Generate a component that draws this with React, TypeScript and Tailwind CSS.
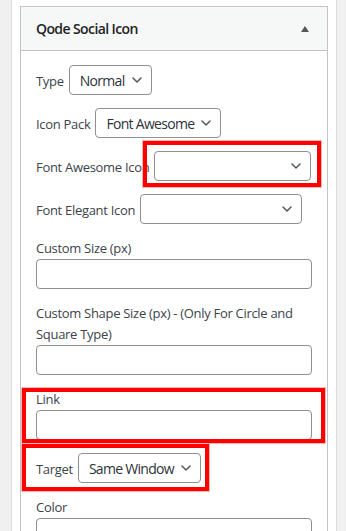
import React from 'react'

function Chevron() {
  return (
    <svg viewBox="0 0 10 6" className="w-[10px] h-[6px] shrink-0" fill="none">
      <path d="M1 1l4 4 4-4" stroke="#50575e" strokeWidth="1.5" strokeLinecap="round" strokeLinejoin="round" />
    </svg>
  )
}

function Select({ value, width }: { value?: string; width?: string }) {
  return (
    <div
      className={`h-[30px] flex items-center justify-between gap-[7px] pl-[10px] pr-[9px] border border-[#8c8f94] rounded-[4px] bg-white text-[14px] tracking-[-0.7px] text-[#2c3338] ${width ?? ''}`}
    >
      <span className="whitespace-nowrap">{value}</span>
      <Chevron />
    </div>
  )
}

function InlineSelect({ label, value, width }: { label: string; value?: string; width?: string }) {
  return (
    <div className="flex items-center gap-[5px] mb-[13px]">
      <span className="whitespace-nowrap pt-[3px]">{label}</span>
      <Select value={value} width={width} />
    </div>
  )
}

function TextField({ label }: { label: React.ReactNode }) {
  return (
    <div className="mb-[13px]">
      <div className="leading-[21px] pt-[1px]">{label}</div>
      <div className="h-[30px] w-[276px] border border-[#8c8f94] rounded-[4px] bg-white" />
    </div>
  )
}

export default function App() {
  return (
    <div className="relative h-[531px] overflow-hidden bg-[#f0f0f1] font-['Open_Sans',sans-serif] text-[13px] tracking-[-0.3px] text-[#3c434a]">
      <div className="ml-[11px] w-[326px] h-full border-x border-[#dcdcde] bg-white pt-[6px] px-[8px]">
        <div className="border border-[#c3c4c7] bg-white h-[600px]">
          <div className="h-[44px] bg-[#f6f7f7] border-b border-[#c3c4c7] flex items-center justify-between pl-[15px] pr-[18px]">
            <h2 className="text-[14px] font-semibold tracking-[-0.6px] text-[#1d2327]">Qode Social Icon</h2>
            <svg viewBox="0 0 8 6" className="w-[8px] h-[6px]">
              <path d="M4 0L8 6H0z" fill="#50575e" />
            </svg>
          </div>
          <div className="pl-[15px] pr-[14px] pt-[14px]">
            <InlineSelect label="Type" value="Normal" />
            <InlineSelect label="Icon Pack" value="Font Awesome" />
            <InlineSelect label="Font Awesome Icon" width="w-[157px]" />
            <InlineSelect label="Font Elegant Icon" width="w-[162px]" />
            <TextField label="Custom Size (px)" />
            <TextField
              label={
                <>
                  Custom Shape Size (px) - (Only For Circle and
                  <br />
                  Square Type)
                </>
              }
            />
            <TextField label="Link" />
            <InlineSelect label="Target" value="Same Window" />
            <TextField label="Color" />
          </div>
        </div>
      </div>

      {/* annotation boxes */}
      <div className="absolute left-[143px] top-[141px] w-[178px] h-[46px] border-4 border-[#ff0000] shadow-[0_0_0_1px_#ffb8b8]" />
      <div className="absolute left-[22px] top-[388px] w-[303px] h-[55px] border-4 border-[#ff0000] shadow-[0_0_0_1px_#ffb8b8]" />
      <div className="absolute left-[22px] top-[444px] w-[187px] h-[47px] border-4 border-[#ff0000] shadow-[0_0_0_1px_#ffb8b8]" />
    </div>
  )
}
